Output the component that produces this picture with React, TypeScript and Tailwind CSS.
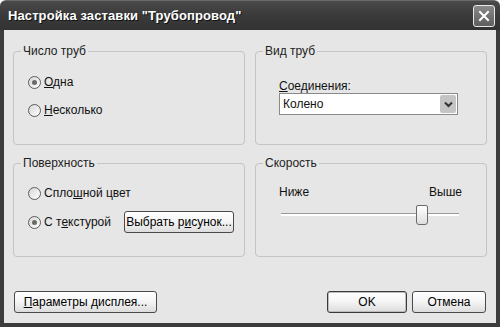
import { ReactNode } from 'react'

const font = { fontFamily: '"Liberation Sans", Arial, sans-serif' }

function Radio({ checked, children }: { checked?: boolean; children: ReactNode }) {
  return (
    <div className="flex items-center gap-[3px] leading-[14px]">
      <span className="flex h-[13px] w-[13px] items-center justify-center rounded-full border border-[#5c5c5c] bg-gradient-to-br from-[#d6d6d6] to-[#ffffff]">
        {checked && <span className="h-[5px] w-[5px] rounded-full bg-[#6a6a6a]" />}
      </span>
      <span>{children}</span>
    </div>
  )
}

function Button({ children, className = '', def = false }: { children: ReactNode; className?: string; def?: boolean }) {
  return (
    <button
      className={`flex h-[22px] items-center justify-center rounded-[3px] border bg-gradient-to-b from-[#ffffff] via-[#f4f4f4] to-[#dcdcdc] text-[12px] leading-[14px] text-black ${
        def ? 'border-[#3a3a3a] shadow-[inset_0_0_0_1px_#bdbdbd]' : 'border-[#4a4a4a]'
      } ${className}`}
    >
      {children}
    </button>
  )
}

function Group({ title, children }: { title: string; children: ReactNode }) {
  return (
    <fieldset className="h-[100px] rounded-[4px] border border-[#c4c4c4]">
      <legend className="ml-[7px] px-[2px] text-[12px] leading-[13px] text-[#222]">{title}</legend>
      {children}
    </fieldset>
  )
}

export default function App() {
  return (
    <div className="flex h-[327px] w-[500px] flex-col overflow-hidden bg-white text-[12px] leading-[14px] text-[#111]" style={font}>
      {/* title bar */}
      <div className="flex h-[30px] items-center justify-between rounded-t-[6px] border-t border-[#6a6a6a] bg-gradient-to-b from-[#4a4a4a] via-[#3a3a3a] to-[#333333] pl-[8px] pr-[5px]">
        <span className="text-[13px] font-bold tracking-[0.1px] text-white [text-shadow:1px_1px_0_#111]">
          Настройка заставки "Трубопровод"
        </span>
        <span className="flex h-[22px] w-[22px] items-center justify-center rounded-[3px] border border-[#e8e8e8] bg-gradient-to-b from-[#8a8a8a] to-[#5e5e5e]">
          <svg width="12" height="12" viewBox="0 0 12 12">
            <path d="M2 2 L10 10 M10 2 L2 10" stroke="white" strokeWidth="2" strokeLinecap="square" />
          </svg>
        </span>
      </div>

      {/* body */}
      <div className="flex flex-1 flex-col border-x-[4px] border-b-[4px] border-[#3c3c3c] bg-[#e6e6e6] px-[9px] pt-[15px]">
        <div className="grid grid-cols-2 gap-x-[10px] gap-y-[12px]">
          <Group title="Число труб">
            <div className="flex flex-col gap-[14px] pl-[14px] pt-[17px]">
              <Radio checked>
                <u>О</u>дна
              </Radio>
              <Radio>
                <u>Н</u>есколько
              </Radio>
            </div>
          </Group>

          <Group title="Вид труб">
            <div className="px-[23px] pt-[21px]">
              <div>
                <u>С</u>оединения:
              </div>
              <div className="flex h-[22px] w-[179px] items-center border border-[#8a8a8a] bg-white pl-[3px] pr-[1px]">
                <span className="flex-1">Колено</span>
                <span className="flex h-[18px] w-[16px] items-center justify-center rounded-[2px] bg-[#c4c4c4]">
                  <svg width="9" height="7" viewBox="0 0 9 7">
                    <path d="M1 1.5 L4.5 5 L8 1.5" fill="none" stroke="#333" strokeWidth="2" />
                  </svg>
                </span>
              </div>
            </div>
          </Group>

          <Group title="Поверхность">
            <div className="flex flex-col gap-[11px] pl-[14px] pt-[16px]">
              <Radio>
                Спло<u>ш</u>ной цвет
              </Radio>
              <div className="flex items-center gap-[13px]">
                <Radio checked>
                  С т<u>е</u>кстурой
                </Radio>
                <Button className="w-[110px]">
                  Выбрать р<u>и</u>сунок...
                </Button>
              </div>
            </div>
          </Group>

          <Group title="Скорость">
            <div className="px-[23px] pt-[15px]">
              <div className="flex justify-between pr-[1px]">
                <span>Ниже</span>
                <span>Выше</span>
              </div>
              <div className="relative mt-[6px] h-[20px]">
                <div className="absolute left-[2px] right-[4px] top-[8px] h-[3px] border-t border-[#9a9a9a] bg-white" />
                <div
                  className="absolute top-0 h-[20px] w-[12px] rounded-b-[3px] rounded-t-[2px] border border-[#6a6a6a] bg-gradient-to-b from-[#ffffff] to-[#dedede]"
                  style={{ left: `${0.77 * 178}px` }}
                />
              </div>
            </div>
          </Group>
        </div>

        <div className="mt-[34px] flex items-center">
          <Button className="ml-[1px] w-[143px]">
            <u>П</u>араметры дисплея...
          </Button>
          <div className="ml-auto flex gap-[5px] pr-[1px]">
            <Button def className="w-[80px]">
              OK
            </Button>
            <Button className="w-[74px]">Отмена</Button>
          </div>
        </div>
      </div>
    </div>
  )
}
